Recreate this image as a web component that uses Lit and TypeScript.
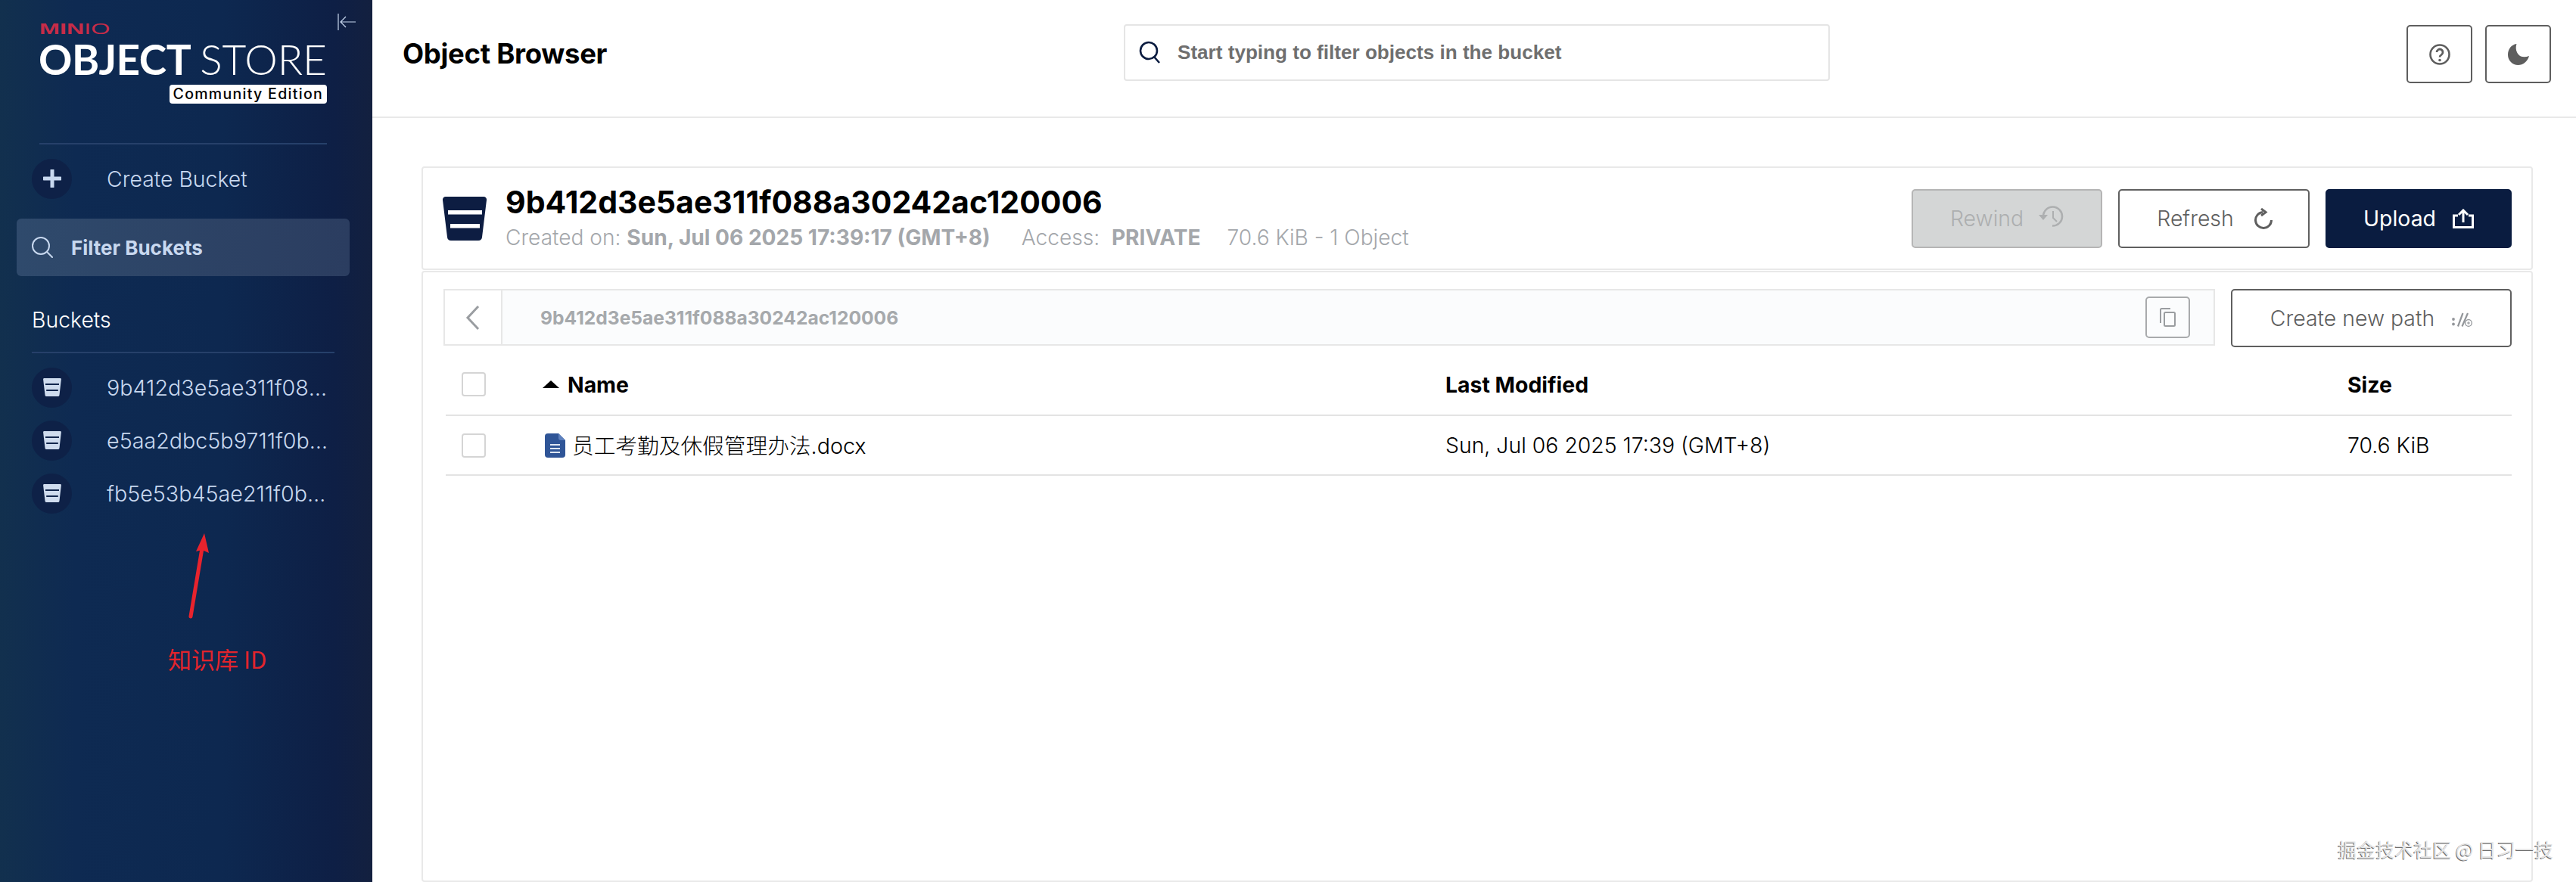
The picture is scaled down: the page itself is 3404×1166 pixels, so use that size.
import { LitElement, html, css } from "lit";
import { customElement } from "lit/decorators.js";

const smallBucket = html`<svg class="sb" viewBox="0 0 24 24"><path d="M1.400 0h21.200c.8 0 1.400.7 1.300 1.500l-2.400 20.700c-.1 1-.9 1.800-1.900 1.800H4.400c-1 0-1.800-.8-1.900-1.800L.1 1.500C0 .7.6 0 1.400 0z" fill="#cfdcee"/><rect x="3" y="7" width="18" height="2" fill="#12264c"/><rect x="4.200" y="15" width="15.600" height="2" fill="#12264c"/></svg>`;

@customElement("app-root")
export class AppRoot extends LitElement {
  static styles = css`
    :host { display: block; height: 100vh; overflow: hidden; font-family: Inter, "Noto Sans CJK SC", sans-serif; color: #000; background: #fff; }
    * { box-sizing: border-box; }
    .app { display: grid; grid-template-columns: 492px 1fr; height: 1166px; position: relative; }

    .side { background: linear-gradient(90deg, #12304e 0%, #0e2a52 20%, #0d2850 60%, #0e1f45 90%, #13203f 100%); padding: 18px 0 0; color: #c8d8ef; position: relative; }
    .logoRow { display: flex; justify-content: space-between; padding: 0 22px 0 51px; height: 171px; }
    .logo { width: 381px; display: flex; flex-direction: column; }
    .minio { font: 700 21px/15px "Liberation Sans", sans-serif; color: #c72c48; height: 15px; margin: 12px 0 0 1px; transform: scaleX(1.54); transform-origin: left; white-space: nowrap; }
    .minio i { font-style: normal; font-weight: 400; }
    .os { font: 700 55px/46px Lato, sans-serif; color: #fff; height: 52px; margin-top: 10px; white-space: nowrap; letter-spacing: -.5px; display: flex; justify-content: space-between; }
    .os span { font-weight: 300; letter-spacing: 0; }
    .edition { align-self: flex-end; background: #fff; color: #000; border-radius: 4px; font: 500 19.500px/25px Inter, sans-serif; letter-spacing: 1.300px; padding: 0 5px; height: 25px; white-space: nowrap; margin-top: 5px; }
    .collapse { width: 24px; height: 22px; stroke: #c8d8ef; fill: none; stroke-width: 1.200; flex: none; }
    .rule { height: 2px; background: #26406a; }
    .r1 { margin: 0 60px 0 52px; }
    .create { display: flex; align-items: center; height: 90px; padding-left: 42px; font-weight: 300; font-size: 28.400px; }
    .circle { width: 53px; height: 53px; border-radius: 50%; background: #0e2147; display: flex; align-items: center; justify-content: center; flex: none; margin-right: 46px; }
    .circle svg { width: 24px; height: 24px; }
    .filter { margin: 8px 30px 0 22px; height: 76px; background: linear-gradient(90deg, #2f4a6c, #2b3d60); border-radius: 6px; display: flex; align-items: center; padding-left: 20px; gap: 24px; font-weight: 700; font-size: 26px; }
    .filter svg { width: 28px; height: 28px; stroke: #c8d8ef; fill: none; stroke-width: 2; }
    .bh { color: #fff; font-size: 28.400px; font-weight: 300; padding: 39px 0 0 42px; height: 100px; line-height: 37px; }
    .r2 { margin: 0 50px 0 42px; }
    .blist { display: flex; flex-direction: column; padding: 10px 0 0 42px; }
    .bitem { display: flex; align-items: center; height: 70px; font-weight: 300; font-size: 28.700px; }
    .bitem .circle { background: #0e2147; margin-right: 46px; }
    .sb { width: 24px; height: 24px; }
    .bname { width: 296px; overflow: hidden; text-overflow: ellipsis; white-space: nowrap; }

    .arrow { position: absolute; left: 240px; top: 695px; width: 50px; height: 130px; }
    .note { position: absolute; left: 222px; top: 852px; color: #e2242c; font-size: 31px; line-height: 38px; font-family: "Noto Sans CJK SC", sans-serif; font-weight: 400; white-space: nowrap; }

    .main { display: flex; flex-direction: column; min-width: 0; }
    .top { height: 156px; border-bottom: 2px solid #e9e9e9; display: grid; grid-template-columns: 953px 933px 1fr; align-items: start; padding-left: 40px; }
    .top h1 { font-size: 36.500px; font-weight: 700; margin: 49px 0 0; line-height: 44px; letter-spacing: -.3px; }
    .search { margin-top: 32px; height: 75px; border: 2px solid #e5e5e5; border-radius: 4px; display: flex; align-items: center; padding-left: 18px; gap: 23px; color: #6f6f6f; font: 700 26.100px "Liberation Sans", Arial, sans-serif; }
    .search svg { width: 28px; height: 31px; stroke: #0b1c40; stroke-width: 2.600; fill: none; }
    .tools { display: flex; gap: 17px; margin-top: 33px; justify-content: flex-end; padding-right: 33px; }
    .tbtn { width: 87px; height: 77px; border: 2px solid #5e5e5e; border-radius: 5px; background: #fff; display: flex; align-items: center; justify-content: center; }
    .tbtn svg { width: 28px; height: 28px; }

    .content { padding: 64px 57px 0 65px; display: flex; flex-direction: column; flex: 1; }
    .card { border: 2px solid #e9e9e9; border-radius: 4px; }
    .head { height: 137px; display: flex; align-items: center; padding: 0 26px; }
    .bk { width: 58px; height: 58px; flex: none; margin-right: 25px; }
    .info { flex: 1; min-width: 0; }
    .title { font-size: 41px; font-weight: 700; line-height: 48px; margin-top: -4px; }
    .meta { display: flex; font-size: 28.100px; line-height: 34px; color: #a4a7ab; font-weight: 300; margin-top: 6px; gap: 35px; white-space: nowrap; }
    .meta .created { margin-right: 6px; }
    .meta b { font-weight: 700; }
    .btns { display: flex; gap: 21px; }
    .btn { height: 78px; border-radius: 5px; display: flex; align-items: center; justify-content: center; gap: 22px; font-size: 28.400px; font-weight: 300; border: 2px solid #5f5f5f; background: #fff; color: #5f5f5f; white-space: nowrap; }
    .btn svg { flex: none; fill: none; stroke: currentColor; }
    .rew { width: 252px; background: #d4d6d6; border-color: #b5b5b5; color: #adafb0; gap: 20px; }
    .rew svg { width: 33px; height: 28px; margin-top: -6px; stroke-width: 2.600; }
    .ref { width: 253px; gap: 26px; padding-left: 3px; }
    .ref svg { width: 26px; height: 28px; stroke-width: 3; }
    .upl { width: 246px; background: #0a1c40; border-color: #0a1c40; color: #fff; font-weight: 400; }
    .upl svg { width: 28px; height: 26px; stroke-width: 3; }
    .cnp { width: 371px; height: 77px; gap: 23px; }
    .cnp svg { width: 27px; height: 19px; stroke: none; margin-top: 4px; }

    .body { flex: 1; margin-top: 1px; padding: 22px 26px 0 27px; }
    .pathRow { display: flex; gap: 21px; align-items: flex-start; }
    .path { flex: 1; height: 75px; border: 2px solid #e7e7e7; display: flex; align-items: center; background: #fbfcfd; padding-right: 31px; }
    .back { width: 76px; height: 100%; background: #fff; border-right: 2px solid #e7e7e7; display: flex; align-items: center; justify-content: center; flex: none; }
    .back svg { width: 22px; height: 34px; fill: none; stroke: #9a9da1; stroke-width: 3; }
    .ptext { flex: 1; padding-left: 50px; font-weight: 700; font-size: 24.600px; color: #a6a9ac; }
    .copy { width: 59px; height: 55px; border: 2px solid #a8aaac; border-radius: 5px; display: flex; align-items: center; justify-content: center; }
    .copy svg { width: 21px; height: 25px; fill: none; stroke: #9a9da0; stroke-width: 2; }

    .row { display: grid; grid-template-columns: 126px 1195px 1192px 1fr; align-items: center; border-bottom: 2px solid #e3e3e3; margin-left: 3px; }
    .row.h { height: 91px; padding-top: 9px; font-weight: 700; font-size: 28.400px; }
    .row.d { height: 79px; font-size: 28.400px; font-weight: 300; }
    .cb { width: 32px; height: 32px; border: 2px solid #d5d5d5; border-radius: 4px; margin-left: 21px; background: #fff; }
    .name { display: flex; align-items: center; }
    .tri { width: 0; height: 0; border: 11px solid transparent; border-top: 0; border-bottom: 10px solid #000; margin: 0 11px 0 2px; }
    .doc { width: 27px; height: 32px; margin: 0 9px 0 5px; flex: none; }
    .fname { margin-top: -3px; font-size: 28.700px; }
    .mark { position: absolute; right: 30px; top: 1105px; font: 400 25px/34px "Noto Sans CJK SC", sans-serif; color: #e6e6e6; text-shadow: -1px 1px 0 #6d6d6d; white-space: nowrap; }
  `;

  render() {
    return html`<div class="app">
      <aside class="side">
        <div class="logoRow">
          <div class="logo">
            <div class="minio">MIN<i>IO</i></div>
            <div class="os">OBJECT<span>STORE</span></div>
            <div class="edition">Community Edition</div>
          </div>
          <svg class="collapse" viewBox="0 0 24 22"><path d="M1 0v22M24 11H4M11 4l-7 7 7 7"/></svg>
        </div>
        <div class="rule r1"></div>
        <div class="create"><span class="circle"><svg viewBox="0 0 24 24"><path d="M12 1v22M1 12h22" stroke="#c8d8ef" stroke-width="5" stroke-linecap="round"/></svg></span>Create Bucket</div>
        <div class="filter"><svg viewBox="0 0 28 28"><circle cx="12" cy="12" r="11"/><path d="M20 20l7 7" stroke-linecap="round"/></svg>Filter Buckets</div>
        <div class="bh">Buckets</div>
        <div class="rule r2"></div>
        <div class="blist">
          ${["9b412d3e5ae311f088a30242ac120006", "e5aa2dbc5b9711f0b8a30242ac120006", "fb5e53b45ae211f0b8a30242ac120006"].map(
            (n) => html`<div class="bitem"><span class="circle">${smallBucket}</span><span class="bname">${n}</span></div>`
          )}
        </div>
        <svg class="arrow" viewBox="0 0 50 130"><path d="M12 120L27 30" stroke="#e8232d" stroke-width="5" stroke-linecap="round"/><path d="M30 10L19 34l8-2 9 4z" fill="#e8232d"/></svg>
        <div class="note">知识库 ID</div>
      </aside>
      <main class="main">
        <header class="top">
          <h1>Object Browser</h1>
          <div class="search"><svg viewBox="0 0 28 31"><circle cx="13" cy="13" r="11"/><path d="M20 21l7 8"/></svg>Start typing to filter objects in the bucket</div>
          <div class="tools">
            <div class="tbtn"><svg viewBox="0 0 28 28"><circle cx="14" cy="14" r="12.500" fill="none" stroke="#5e5e5e" stroke-width="2.600"/><path d="M10 11a4 4 0 1 1 6.200 3.400c-1.400.8-2.200 1.300-2.200 3" fill="none" stroke="#5e5e5e" stroke-width="2.800"/><circle cx="14" cy="21.500" r="1.800" fill="#5e5e5e"/></svg></div>
            <div class="tbtn"><svg viewBox="0 0 28 28"><path d="M11.500 0C4.500 1 0 7 0 14.500 0 22 6 28 13.500 28 20 28 26 23.500 28 16 22 18.500 16.500 17.500 13.500 13.500 10.500 9.500 10 4.500 11.500 0z" fill="#5e5e5e"/></svg></div>
          </div>
        </header>
        <div class="content">
          <section class="card head">
            <svg class="bk" viewBox="0 0 58 58"><path d="M4 0h50a4 4 0 0 1 4 4.500l-6 49A5 5 0 0 1 47 58H11a5 5 0 0 1-5-4.500l-6-49A4 4 0 0 1 4 0z" fill="#0d1d42"/><rect x="7" y="18" width="45" height="5.500" fill="#fff"/><rect x="10" y="36" width="39" height="5.500" fill="#fff"/></svg>
            <div class="info">
              <div class="title">9b412d3e5ae311f088a30242ac120006</div>
              <div class="meta"><span class="created">Created on: <b>Sun, Jul 06 2025 17:39:17 (GMT+8)</b></span><span>Access: &nbsp;<b>PRIVATE</b></span><span>70.6 KiB - 1 Object</span></div>
            </div>
            <div class="btns">
              <div class="btn rew">Rewind<svg viewBox="0 0 33 28"><path d="M18 26.500A12.500 12.500 0 1 0 6 14"/><path d="M0 12h12l-6 7z" fill="currentColor" stroke="none"/><path d="M19 7v9l5 5" stroke-width="2"/></svg></div>
              <div class="btn ref">Refresh<svg viewBox="0 0 26 28"><path d="M23.500 16A10.500 10.500 0 1 1 12 5.500"/><path d="M10 1l6 4.500-6 4.500" stroke-width="3"/></svg></div>
              <div class="btn upl">Upload<svg viewBox="0 0 28 26"><path d="M7 9H1.500v15.500h25V9H21M14 18V2M8 8l6-6 6 6"/></svg></div>
            </div>
          </section>
          <section class="card body">
            <div class="pathRow">
              <div class="path">
                <div class="back"><svg viewBox="0 0 22 34"><path d="M18 2L4 17l14 15"/></svg></div>
                <div class="ptext">9b412d3e5ae311f088a30242ac120006</div>
                <div class="copy"><svg viewBox="0 0 21 25"><rect x="6" y="6" width="14" height="18" rx="1.500"/><path d="M1 20V2.500C1 1.500 1.500 1 2.500 1H14"/></svg></div>
              </div>
              <div class="btn cnp">Create new path<svg viewBox="0 0 27 19"><circle cx="2" cy="9" r="1.900" fill="#93969a"/><circle cx="2" cy="15.500" r="1.900" fill="#93969a"/><path d="M8 18.500L14.500 1M13.500 18.500L21 1" stroke="#93969a" stroke-width="2.200" fill="none"/><circle cx="22" cy="14" r="4.300" fill="#fff" stroke="#93969a" stroke-width="1.300"/><path d="M22 12v4M20 14h4" stroke="#93969a" stroke-width="1.100"/></svg></div>
            </div>
            <div class="row h">
              <div class="cb"></div>
              <div class="name"><span class="tri"></span>Name</div>
              <div>Last Modified</div>
              <div>Size</div>
            </div>
            <div class="row d">
              <div class="cb"></div>
              <div class="name"><svg class="doc" viewBox="0 0 27 32"><path d="M4 0h14l9 9v19a4 4 0 0 1-4 4H4a4 4 0 0 1-4-4V4a4 4 0 0 1 4-4z" fill="#2f5597"/><path d="M18 0l9 9h-6a3 3 0 0 1-3-3z" fill="#5d80bd"/><path d="M7 15h13M7 20h13M7 25h13" stroke="#dfe7f3" stroke-width="2"/></svg><span class="fname">员工考勤及休假管理办法.docx</span></div>
              <div>Sun, Jul 06 2025 17:39 (GMT+8)</div>
              <div>70.6 KiB</div>
            </div>
          </section>
        </div>
      </main>
      <div class="mark">掘金技术社区 @ 日习一技</div>
    </div>`;
  }
}
